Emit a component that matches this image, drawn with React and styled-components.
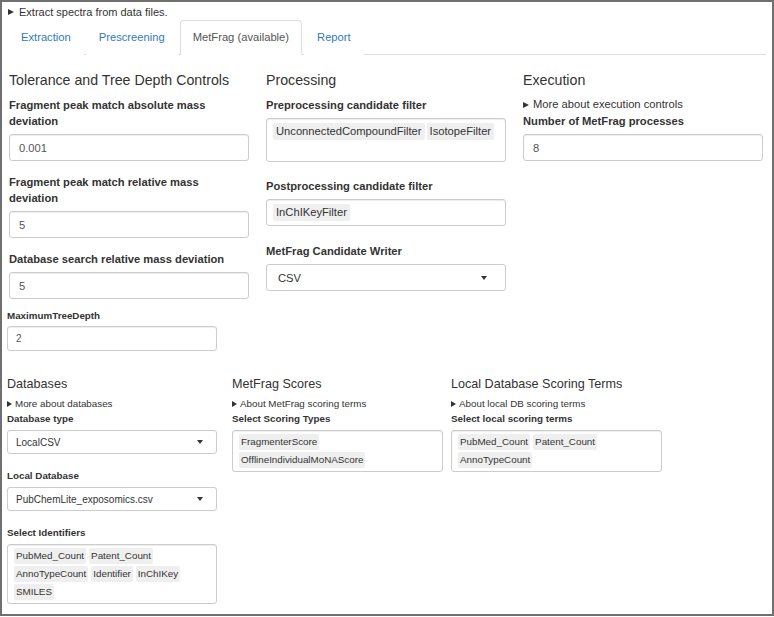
import React from 'react';
import styled, { createGlobalStyle } from 'styled-components';

const GlobalStyle = createGlobalStyle`
  html, body { margin: 0; padding: 0; background: #fff; }
  body {
    font-family: "Liberation Sans", Arial, Helvetica, sans-serif;
    color: #333;
  }
  * { box-sizing: border-box; }
`;

const Frame = styled.div`
  width: 774px;
  height: 616px;
  border: 2px solid #707070;
  overflow: hidden;
`;

const Disclosure = styled.div`
  display: flex;
  align-items: center;
  gap: ${(p) => p.$gap || 6}px;
  font-size: ${(p) => p.$size || 11.2}px;
  line-height: ${(p) => p.$lh || 14}px;
  color: #333;
  margin: ${(p) => p.$margin || '0'};
`;

const Arrow = styled.span`
  width: 0;
  height: 0;
  border-left: ${(p) => (p.$small ? 5 : 6)}px solid #333;
  border-top: ${(p) => (p.$small ? 3 : 3.5)}px solid transparent;
  border-bottom: ${(p) => (p.$small ? 3 : 3.5)}px solid transparent;
`;

const TabBar = styled.ul`
  display: flex;
  list-style: none;
  margin: 1px 0 0 6px;
  padding: 0;
  width: 758px;
  height: 35px;
  border-bottom: 1px solid #ddd;
`;

const Tab = styled.li`
  margin: 0 2px -1px 0;
  padding: 9px 12px 10px;
  border: 1px solid ${(p) => (p.$active ? '#ddd' : 'transparent')};
  border-bottom-color: ${(p) => (p.$active ? '#fff' : 'transparent')};
  border-radius: 4px 4px 0 0;
  background: #fff;
  font-size: 11.2px;
  line-height: 14px;
  color: ${(p) => (p.$active ? '#555' : '#337ab7')};
`;

const TopGrid = styled.div`
  display: grid;
  grid-template-columns: repeat(3, 240px);
  column-gap: 17px;
  align-items: start;
  margin: 17px 0 0 7px;
`;

const Column = styled.div`
  display: flex;
  flex-direction: column;
`;

const Heading = styled.h3`
  margin: 0 0 ${(p) => (p.$small ? 5 : 8)}px;
  font-weight: normal;
  font-size: ${(p) => (p.$small ? 12.6 : 14.2)}px;
  line-height: ${(p) => (p.$small ? 15 : 17)}px;
  color: #333;
`;

const Group = styled.div`
  display: flex;
  flex-direction: column;
  margin-bottom: ${(p) => p.$gap ?? 13}px;
`;

const Label = styled.label`
  font-weight: bold;
  font-size: ${(p) => (p.$small ? 9.8 : 11.2)}px;
  line-height: ${(p) => (p.$small ? 14 : 16)}px;
  margin-bottom: ${(p) => (p.$small ? 4 : 5)}px;
  color: #333;
`;

const TextInput = styled.input`
  width: ${(p) => p.$w || 240}px;
  height: ${(p) => (p.$small ? 25 : 27)}px;
  border: 1px solid #ccc;
  border-radius: 3px;
  padding: 0 ${(p) => (p.$small ? 8 : 9)}px;
  font-family: inherit;
  font-size: ${(p) => (p.$small ? 10 : 11.2)}px;
  color: #555;
  box-shadow: inset 0 1px 1px rgba(0, 0, 0, 0.075);
  outline: none;
`;

const TagBox = styled.div`
  width: ${(p) => p.$w || 240}px;
  min-height: ${(p) => p.$min || 27}px;
  border: 1px solid #ccc;
  border-radius: 3px;
  padding: ${(p) => (p.$small ? '3px 6px 1px' : '4px 6px 2px')};
  display: flex;
  flex-wrap: wrap;
  align-content: flex-start;
  box-shadow: inset 0 1px 1px rgba(0, 0, 0, 0.075);
`;

const Tag = styled.span`
  background: #efefef;
  border-radius: 2px;
  color: #333;
  padding: 0 ${(p) => (p.$small ? 2 : 3)}px;
  margin: 0 ${(p) => (p.$small ? 3 : 2)}px 2px 0;
  font-size: ${(p) => (p.$small ? 9.8 : 11.2)}px;
  line-height: ${(p) => (p.$small ? 16 : 17)}px;
`;

const Select = styled.div`
  width: ${(p) => p.$w || 240}px;
  height: ${(p) => (p.$small ? 24 : 27)}px;
  border: 1px solid #ccc;
  border-radius: 3px;
  padding: ${(p) => (p.$small ? '0 13px 0 8px' : '0 18px 0 11px')};
  display: flex;
  align-items: center;
  justify-content: space-between;
  font-size: ${(p) => (p.$small ? 10 : 11.2)}px;
  color: #333;
  background: #fff;
`;

const Caret = styled.span`
  width: 0;
  height: 0;
  border-left: ${(p) => (p.$small ? 3 : 3.5)}px solid transparent;
  border-right: ${(p) => (p.$small ? 3 : 3.5)}px solid transparent;
  border-top: 4px solid #333;
`;

const DepthBlock = styled.div`
  display: flex;
  flex-direction: column;
  margin: 10px 0 0 5px;
  & > label { margin-bottom: 3px; }
`;

const BottomGrid = styled.div`
  display: grid;
  grid-template-columns: 225px 219px 219px;
  align-items: start;
  margin: 26px 0 0 5px;
`;

const tabs = ['Extraction', 'Prescreening', 'MetFrag (available)', 'Report'];

const SmallSummary = ({ children }) => (
  <Disclosure $size={9.8} $lh={13} $gap={3} $margin="0 0 2px">
    <Arrow $small />
    {children}
  </Disclosure>
);

export default function App() {
  return (
    <Frame>
      <GlobalStyle />
      <Disclosure $size={11} $gap={5} $margin="3px 0 0 6px">
        <Arrow />
        Extract spectra from data files.
      </Disclosure>

      <TabBar>
        {tabs.map((t) => (
          <Tab key={t} $active={t === 'MetFrag (available)'}>{t}</Tab>
        ))}
      </TabBar>

      <TopGrid>
        <Column>
          <Heading>Tolerance and Tree Depth Controls</Heading>
          <Group>
            <Label>Fragment peak match absolute mass deviation</Label>
            <TextInput readOnly value="0.001" />
          </Group>
          <Group>
            <Label>Fragment peak match relative mass deviation</Label>
            <TextInput readOnly value="5" />
          </Group>
          <Group $gap={0}>
            <Label>Database search relative mass deviation</Label>
            <TextInput readOnly value="5" />
          </Group>
        </Column>

        <Column>
          <Heading>Processing</Heading>
          <Group $gap={16}>
            <Label>Preprocessing candidate filter</Label>
            <TagBox $min={44}>
              <Tag>UnconnectedCompoundFilter</Tag>
              <Tag>IsotopeFilter</Tag>
            </TagBox>
          </Group>
          <Group $gap={17}>
            <Label>Postprocessing candidate filter</Label>
            <TagBox>
              <Tag>InChIKeyFilter</Tag>
            </TagBox>
          </Group>
          <Group $gap={0}>
            <Label>MetFrag Candidate Writer</Label>
            <Select>
              CSV
              <Caret />
            </Select>
          </Group>
        </Column>

        <Column>
          <Heading>Execution</Heading>
          <Disclosure $lh={17} $gap={4} $margin="-1px 0 0">
            <Arrow />
            More about execution controls
          </Disclosure>
          <Group $gap={0}>
            <Label>Number of MetFrag processes</Label>
            <TextInput readOnly value="8" />
          </Group>
        </Column>
      </TopGrid>

      <DepthBlock>
        <Label $small>MaximumTreeDepth</Label>
        <TextInput $small $w={210} readOnly value="2" />
      </DepthBlock>

      <BottomGrid>
        <Column>
          <Heading $small>Databases</Heading>
          <SmallSummary>More about databases</SmallSummary>
          <Group $gap={15}>
            <Label $small>Database type</Label>
            <Select $small $w={210}>
              LocalCSV
              <Caret $small />
            </Select>
          </Group>
          <Group $gap={15}>
            <Label $small>Local Database</Label>
            <Select $small $w={210}>
              PubChemLite_exposomics.csv
              <Caret $small />
            </Select>
          </Group>
          <Group $gap={0}>
            <Label $small>Select Identifiers</Label>
            <TagBox $small $w={210} $min={60}>
              <Tag $small>PubMed_Count</Tag>
              <Tag $small>Patent_Count</Tag>
              <Tag $small>AnnoTypeCount</Tag>
              <Tag $small>Identifier</Tag>
              <Tag $small>InChIKey</Tag>
              <Tag $small>SMILES</Tag>
            </TagBox>
          </Group>
        </Column>

        <Column>
          <Heading $small>MetFrag Scores</Heading>
          <SmallSummary>About MetFrag scoring terms</SmallSummary>
          <Group $gap={0}>
            <Label $small>Select Scoring Types</Label>
            <TagBox $small $w={211} $min={42}>
              <Tag $small>FragmenterScore</Tag>
              <Tag $small>OfflineIndividualMoNAScore</Tag>
            </TagBox>
          </Group>
        </Column>

        <Column>
          <Heading $small>Local Database Scoring Terms</Heading>
          <SmallSummary>About local DB scoring terms</SmallSummary>
          <Group $gap={0}>
            <Label $small>Select local scoring terms</Label>
            <TagBox $small $w={211} $min={42}>
              <Tag $small>PubMed_Count</Tag>
              <Tag $small>Patent_Count</Tag>
              <Tag $small>AnnoTypeCount</Tag>
            </TagBox>
          </Group>
        </Column>
      </BottomGrid>
    </Frame>
  );
}
